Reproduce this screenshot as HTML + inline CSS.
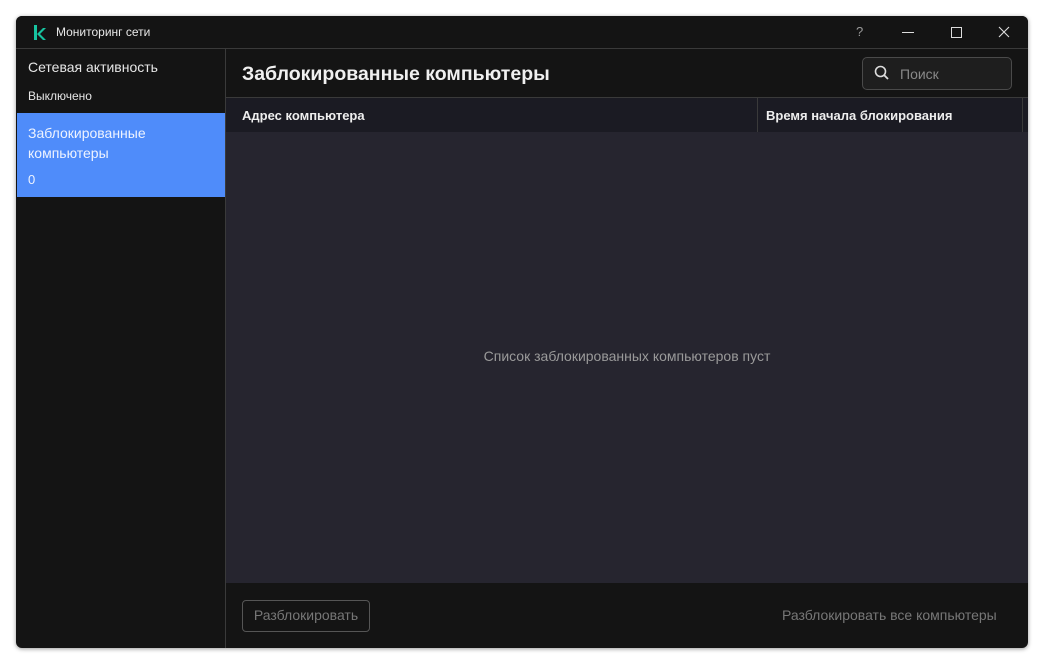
<!DOCTYPE html><html><head><style>
body{margin:0;width:1044px;height:664px;background:#fff;font-family:"Liberation Sans",sans-serif;position:relative;overflow:hidden}
.win{position:absolute;left:16px;top:16px;width:1012px;height:632px;background:#141414;border-radius:6px;overflow:hidden;box-shadow:0 1px 4px rgba(0,0,0,.4)}
.a{position:absolute}
</style></head><body><div class="win">
<div class="a" style="left:0;top:0;width:1012px;height:32px;border-bottom:1px solid #3a3a3a;background:#141414"></div>
<svg class="a" style="left:17px;top:9px" width="14" height="16"><path d="M1 0h3v15h-3z M4 9 L10 3 H13 L7 9 L13 15 H10 Z" fill="#17c3a0"/></svg>
<div class="a" style="left:40px;top:9px;color:#e8e8e8;font-size:12px">Мониторинг сети</div>
<div class="a" style="left:840px;top:8px;color:#999;font-size:13px">?</div>
<div class="a" style="left:886px;top:16px;width:12px;height:1px;background:#ddd"></div>
<div class="a" style="left:935px;top:11px;width:9px;height:9px;border:1px solid #ddd"></div>
<svg class="a" style="left:982px;top:10px" width="12" height="12"><path d="M1 1L11 11M11 1L1 11" stroke="#ddd" stroke-width="1.1"/></svg>
<div class="a" style="left:0;top:33px;width:209px;height:599px;border-right:1px solid #3a3a3a"></div>
<div class="a" style="left:12px;top:43px;color:#e6e6e6;font-size:14px">Сетевая активность</div>
<div class="a" style="left:12px;top:73px;color:#e6e6e6;font-size:12px">Выключено</div>
<div class="a" style="left:1px;top:97px;width:208px;height:84px;background:#4f8cfa"></div>
<div class="a" style="left:12px;top:107px;color:#eef3ff;font-size:14px;line-height:20px">Заблокированные<br>компьютеры</div>
<div class="a" style="left:12px;top:156px;color:#eef3ff;font-size:13px">0</div>
<div class="a" style="left:226px;top:47px;color:#f0f0f0;font-size:19.5px;font-weight:bold">Заблокированные компьютеры</div>
<div class="a" style="left:846px;top:41px;width:148px;height:31px;border:1px solid #4a4a4a;border-radius:5px;background:#1e1e1e"></div>
<svg class="a" style="left:858px;top:49px" width="16" height="16"><circle cx="6.5" cy="6.5" r="5" stroke="#ddd" stroke-width="1.6" fill="none"/><path d="M10 10L14 14" stroke="#ddd" stroke-width="1.8"/></svg>
<div class="a" style="left:884px;top:50px;color:#888;font-size:14px">Поиск</div>
<div class="a" style="left:210px;top:81px;width:802px;height:34px;background:#1b1b23;border-top:1px solid #3a3a3a;border-bottom:1px solid #3a3a3a"></div>
<div class="a" style="left:741px;top:82px;width:1px;height:34px;background:#3a3a3a"></div>
<div class="a" style="left:1006px;top:82px;width:1px;height:34px;background:#3a3a3a"></div>
<div class="a" style="left:226px;top:92px;color:#eee;font-size:13px;font-weight:bold">Адрес компьютера</div>
<div class="a" style="left:750px;top:92px;color:#eee;font-size:13px;font-weight:bold">Время начала блокирования</div>
<div class="a" style="left:210px;top:116px;width:802px;height:451px;background:#26252f"></div>
<div class="a" style="left:210px;top:332px;width:802px;text-align:center;color:#9a9a9a;font-size:14px">Список заблокированных компьютеров пуст</div>
<div class="a" style="left:226px;top:584px;width:126px;height:30px;border:1px solid #555;border-radius:4px"></div>
<div class="a" style="left:226px;top:591px;width:128px;text-align:center;color:#777;font-size:14px">Разблокировать</div>
<div class="a" style="left:766px;top:591px;color:#777;font-size:14px">Разблокировать все компьютеры</div>
</div></body></html>
